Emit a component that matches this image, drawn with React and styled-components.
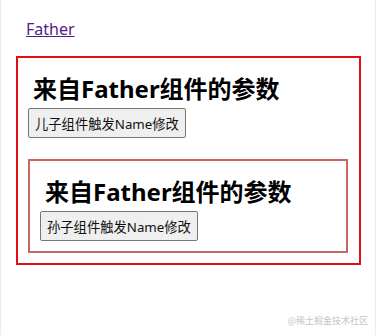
import styled, { createGlobalStyle } from "styled-components";

const GlobalStyle = createGlobalStyle`
  html, body {
    margin: 0;
    padding: 0;
    background: #fff;
  }
  body {
    font-family: "Noto Sans", "Noto Sans CJK SC", sans-serif;
  }
`;

const Page = styled.div`
  position: relative;
  width: 376px;
  height: 335px;
  box-sizing: border-box;
  border-left: 1px solid #ececec;
  border-right: 1px solid #ececec;
  padding: 18px 14px 0 15px;
`;

const NavLink = styled.a`
  display: inline-block;
  margin-left: 10px;
  font-size: 16px;
  line-height: 22px;
  color: #551a8b;
  text-decoration: underline;
`;

const Box = styled.div`
  margin-top: ${(p) => p.$top}px;
  border: 2px solid ${(p) => p.$color};
  padding: 0 ${(p) => p.$right}px 10px 10px;
`;

const Title = styled.h2`
  margin: 16px 0 4px 5px;
  font-family: "Noto Sans", "Noto Sans CJK SC", sans-serif;
  font-size: 24px;
  line-height: 30px;
  font-weight: 700;
  color: #000;
`;

const Button = styled.button`
  display: block;
  height: 30px;
  padding: 0 6px;
  font-family: "Noto Sans", "Noto Sans CJK SC", sans-serif;
  font-size: 13.3px;
  color: #111;
  background: #efefef;
  border: 1px solid #767676;
  border-radius: 2px;
`;

const Watermark = styled.span`
  position: absolute;
  right: 7px;
  bottom: 8px;
  font-size: 9px;
  color: #c4c4c4;
  font-family: "Noto Sans CJK SC", sans-serif;
`;

function Child({ label, children }) {
  return (
    <>
      <Title>来自Father组件的参数</Title>
      <Button type="button">{label}</Button>
      {children}
    </>
  );
}

export default function App() {
  return (
    <>
      <GlobalStyle />
      <Page>
        <NavLink href="#">Father</NavLink>
        <Box $top={16} $color="#e01010" $right={11}>
          <Child label="儿子组件触发Name修改">
            <Box $top={21} $color="#c86464" $right={0}>
              <Child label="孙子组件触发Name修改" />
            </Box>
          </Child>
        </Box>
        <Watermark>@稀土掘金技术社区</Watermark>
      </Page>
    </>
  );
}
